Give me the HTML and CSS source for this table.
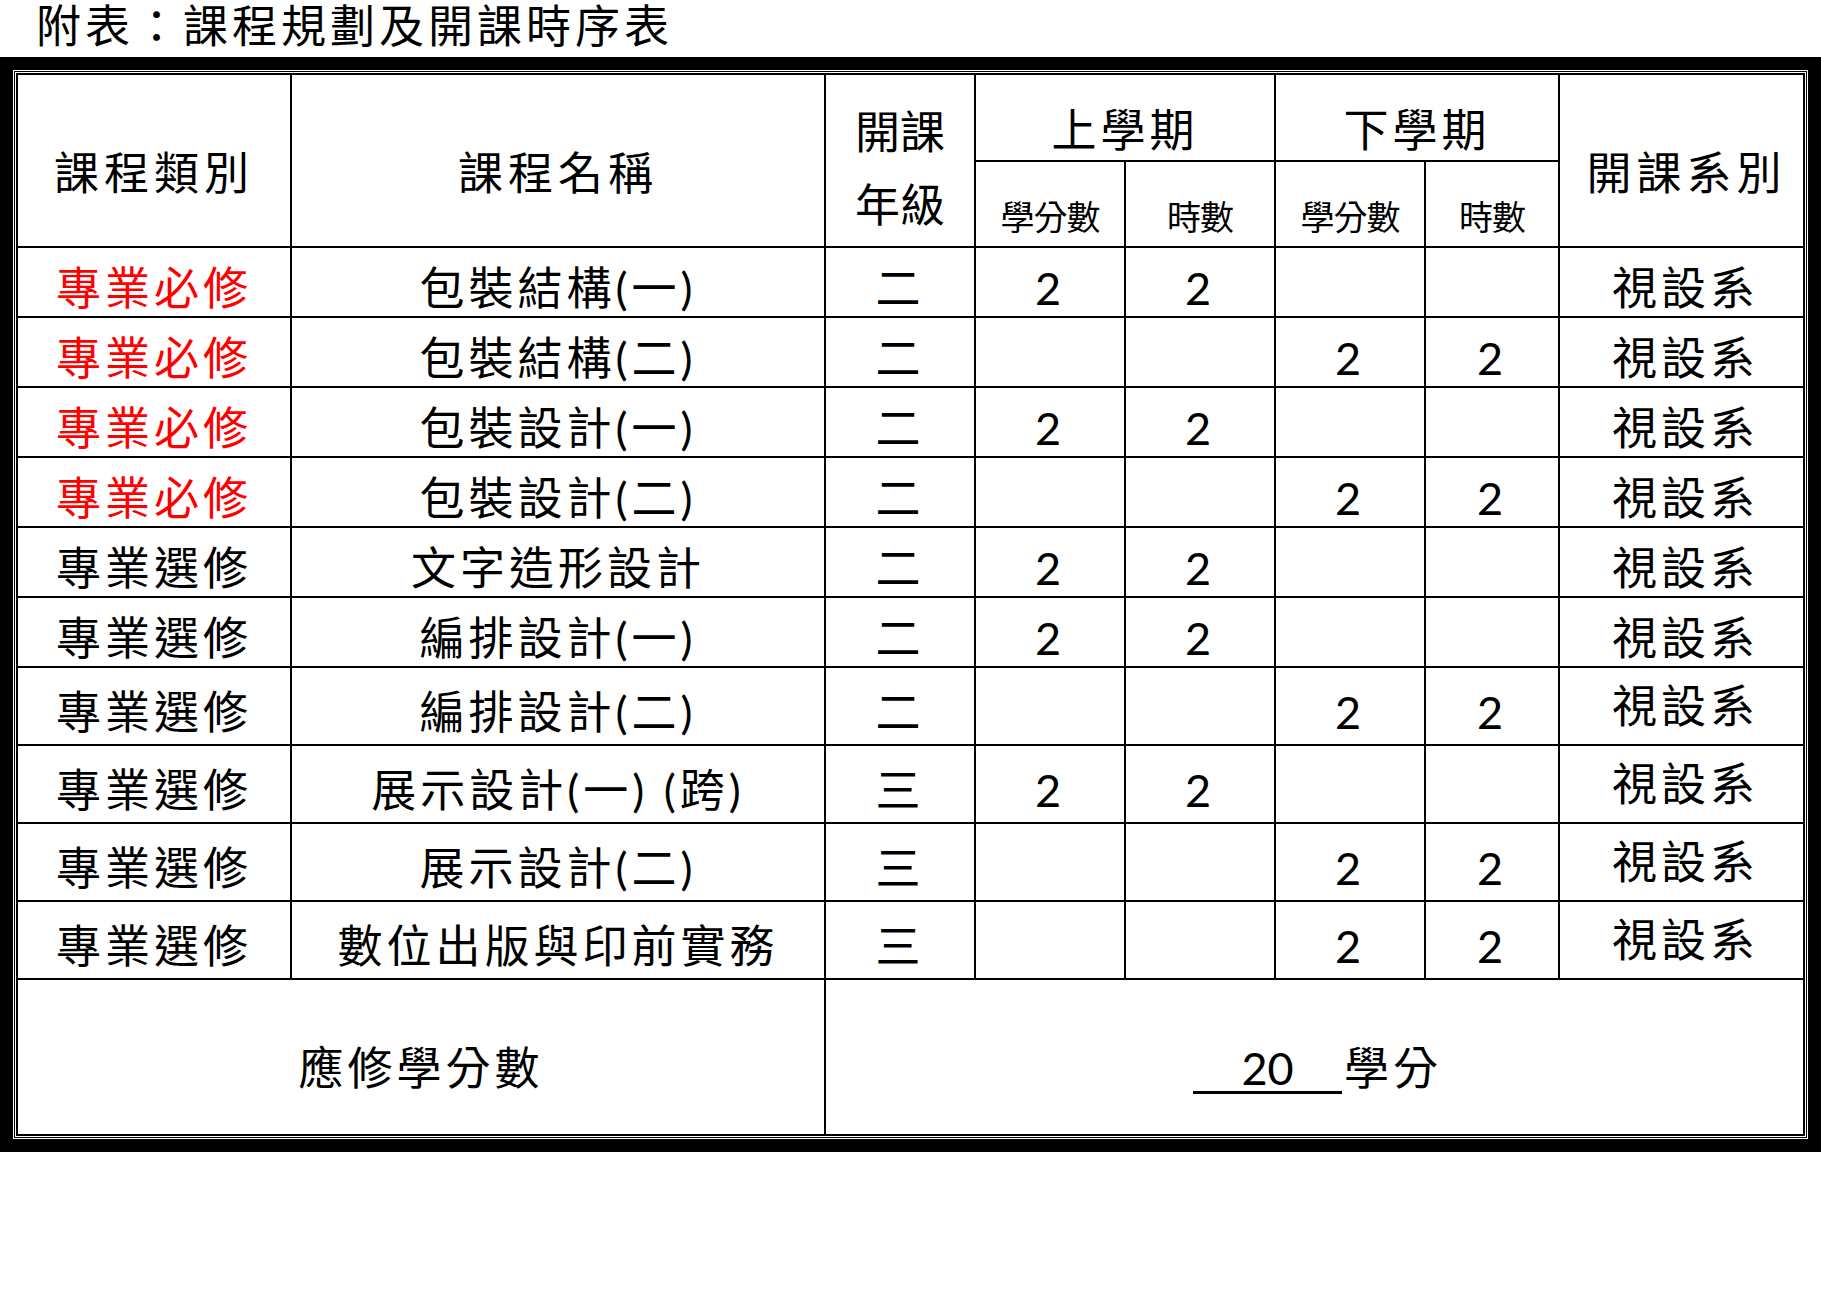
FILE: index.html
```html
<!DOCTYPE html>
<html lang="zh-Hant">
<head>
<meta charset="utf-8">
<title>附表：課程規劃及開課時序表</title>
<link rel="stylesheet" href="styles.css">
</head>
<body>
<h1 class="title">附表：課程規劃及開課時序表</h1>
<div class="frame">
  <div class="frame-inner">
    <table class="plan">
      <colgroup>
        <col class="c-type">
        <col class="c-name">
        <col class="c-num">
        <col class="c-num">
        <col class="c-num">
        <col class="c-num">
        <col class="c-hr2">
        <col class="c-dept">
      </colgroup>
      <thead>
        <tr class="h-top">
          <th rowspan="2" class="hd">課程類別</th>
          <th rowspan="2" class="hd">課程名稱</th>
          <th rowspan="2" class="hd grade">開課<br>年級</th>
          <th colspan="2" class="sem">上學期</th>
          <th colspan="2" class="sem">下學期</th>
          <th rowspan="2" class="hd dept-hd">開課系別</th>
        </tr>
        <tr class="h-sub">
          <th class="sub">學分數</th>
          <th class="sub">時數</th>
          <th class="sub">學分數</th>
          <th class="sub">時數</th>
        </tr>
      </thead>
      <tbody>
        <tr class="row">
          <td class="req">專業必修</td><td>包裝結構(一)</td><td>二</td><td>2</td><td>2</td><td></td><td></td><td class="dept">視設系</td>
        </tr>
        <tr class="row">
          <td class="req">專業必修</td><td>包裝結構(二)</td><td>二</td><td></td><td></td><td>2</td><td>2</td><td class="dept">視設系</td>
        </tr>
        <tr class="row">
          <td class="req">專業必修</td><td>包裝設計(一)</td><td>二</td><td>2</td><td>2</td><td></td><td></td><td class="dept">視設系</td>
        </tr>
        <tr class="row">
          <td class="req">專業必修</td><td>包裝設計(二)</td><td>二</td><td></td><td></td><td>2</td><td>2</td><td class="dept">視設系</td>
        </tr>
        <tr class="row">
          <td>專業選修</td><td>文字造形設計</td><td>二</td><td>2</td><td>2</td><td></td><td></td><td class="dept">視設系</td>
        </tr>
        <tr class="row">
          <td>專業選修</td><td>編排設計(一)</td><td>二</td><td>2</td><td>2</td><td></td><td></td><td class="dept">視設系</td>
        </tr>
        <tr class="row tall">
          <td>專業選修</td><td>編排設計(二)</td><td>二</td><td></td><td></td><td>2</td><td>2</td><td class="dept">視設系</td>
        </tr>
        <tr class="row tall">
          <td>專業選修</td><td>展示設計(一) (跨)</td><td>三</td><td>2</td><td>2</td><td></td><td></td><td class="dept">視設系</td>
        </tr>
        <tr class="row tall">
          <td>專業選修</td><td>展示設計(二)</td><td>三</td><td></td><td></td><td>2</td><td>2</td><td class="dept">視設系</td>
        </tr>
        <tr class="row tall">
          <td>專業選修</td><td>數位出版與印前實務</td><td>三</td><td></td><td></td><td>2</td><td>2</td><td class="dept">視設系</td>
        </tr>
        <tr class="total">
          <td colspan="2">應修學分數</td>
          <td colspan="6" class="sum"><span class="blank">20</span><span class="unit">學分</span></td>
        </tr>
      </tbody>
    </table>
  </div>
</div>
</body>
</html>
```

FILE: styles.css
```css
* {
  box-sizing: border-box;
}

html,
body {
  margin: 0;
  padding: 0;
  background: #fff;
}

body {
  font-family: "Lato", "Noto Sans CJK TC", sans-serif;
  color: #000;
}

.title {
  margin: 0;
  padding-left: 36px;
  height: 52px;
  font-size: 45px;
  line-height: 52px;
  font-weight: 400;
  letter-spacing: 4px;
  white-space: nowrap;
}

.frame {
  margin-top: 5px;
  border: 13px solid #000;
  padding: 1px;
  background: #fff;
}

.frame-inner {
  border: 1px solid #000;
  padding: 1px;
}

.plan {
  width: 100%;
  border-collapse: collapse;
  table-layout: fixed;
  font-size: 45px;
  line-height: 50px;
  letter-spacing: 4px;
}

.c-type { width: 274px; }
.c-name { width: 534px; }
.c-num { width: 150px; }
.c-hr2 { width: 134px; }

.plan th,
.plan td {
  border: 2px solid #000;
  padding: 0;
  text-align: center;
  vertical-align: middle;
  font-weight: 400;
  white-space: nowrap;
}

.h-top { height: 87px; }
.h-sub { height: 86px; }

.plan th.hd {
  padding-top: 24px;
  letter-spacing: 5px;
}

.plan th.dept-hd {
  padding-left: 10px;
}

.plan th.grade {
  padding-top: 17px;
  line-height: 73px;
  letter-spacing: 0;
}

.plan th.sem {
  padding-top: 25px;
  letter-spacing: 4px;
}

.plan th.sub {
  padding-top: 26px;
  font-size: 34px;
  line-height: 40px;
  letter-spacing: -1px;
}

.row { height: 70px; }
.row.tall { height: 78px; }

.row td {
  padding-top: 11px;
}

.row td.dept {
  padding-left: 8px;
}

.row.tall td.dept {
  padding-top: 0;
}

.req {
  color: #ff0000;
}

.total { height: 156px; }

.total td {
  padding-top: 22px;
}

.total td.sum {
  padding-left: 6px;
}

.blank {
  display: inline-block;
  width: 149px;
  line-height: 46px;
  letter-spacing: 0;
  border-bottom: 3px solid #000;
}

.unit {
  margin-left: 2px;
}
```
